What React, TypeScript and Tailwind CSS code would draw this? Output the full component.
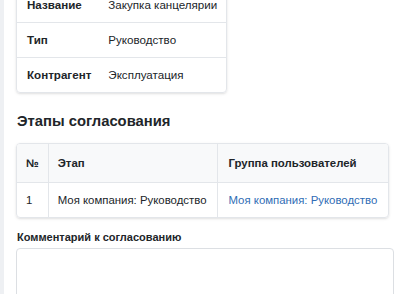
export default function App() {
  return (
    <div className="flex min-h-screen bg-white font-['Liberation_Sans',Arial,sans-serif] text-[#212529]">
      <div className="w-[4px] shrink-0 bg-[#eef0f3]" />
      <div className="flex-1 overflow-hidden pl-3 pr-[9px]">
        {/* info */}
        <div className="-mt-[13px] w-fit overflow-hidden rounded border border-[#e3e6ea] shadow-sm">
          <table className="border-collapse whitespace-nowrap text-[11.6px] leading-[14px]">
            <tbody>
              <tr className="border-b border-[#e3e6ea]">
                <td className="px-[10px] py-[10px] font-bold">Название</td>
                <td className="py-[10px] pr-[9px] pl-[7px]">Закупка канцелярии</td>
              </tr>
              <tr className="border-b border-[#e3e6ea]">
                <td className="px-[10px] py-[10px] font-bold">Тип</td>
                <td className="py-[10px] pr-[9px] pl-[7px]">Руководство</td>
              </tr>
              <tr>
                <td className="px-[10px] py-[10px] font-bold">Контрагент</td>
                <td className="py-[10px] pr-[9px] pl-[7px]">Эксплуатация</td>
              </tr>
            </tbody>
          </table>
        </div>

        <h2 className="mt-[19px] pl-px text-[14.8px] leading-[18px] font-bold">Этапы согласования</h2>

        {/* stages */}
        <div className="mt-[13px] w-fit overflow-hidden rounded border border-[#e3e6ea] shadow-sm">
          <table className="border-collapse whitespace-nowrap text-[11.4px] leading-[14px]">
            <thead>
              <tr className="border-b border-[#e3e6ea] bg-[#f8f9fa]">
                <th className="px-[9px] py-[12px] text-left font-bold">№</th>
                <th className="border-l border-[#e3e6ea] py-[12px] pr-[11px] pl-[9px] text-left font-bold">Этап</th>
                <th className="border-l border-[#e3e6ea] py-[12px] pr-[11px] pl-[10px] text-left font-bold">Группа пользователей</th>
              </tr>
            </thead>
            <tbody>
              <tr>
                <td className="px-[9px] py-[10px]">1</td>
                <td className="border-l border-[#e3e6ea] py-[10px] pr-[11px] pl-[9px]">Моя компания: Руководство</td>
                <td className="border-l border-[#e3e6ea] py-[10px] pr-[11px] pl-[10px]">
                  <a href="#" className="text-[#2f6db5]">Моя компания: Руководство</a>
                </td>
              </tr>
            </tbody>
          </table>
        </div>

        <div className="mt-[12px] pl-px text-[11px] leading-[14px] font-bold">Комментарий к согласованию</div>
        <textarea className="mt-[4px] block h-[80px] w-full resize-none rounded border border-[#dcdfe3] bg-white" />
      </div>
    </div>
  );
}
